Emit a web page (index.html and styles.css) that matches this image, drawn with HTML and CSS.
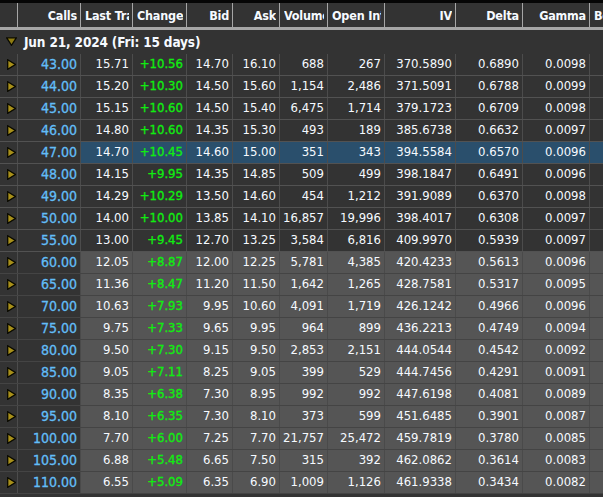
FILE: index.html
```html
<!DOCTYPE html>
<html lang="en">
<head>
<meta charset="utf-8">
<title>Option chain</title>
<link rel="stylesheet" href="styles.css">
</head>
<body>
<svg class="defs" width="0" height="0" aria-hidden="true">
<symbol id="tri-right" viewBox="0 0 9 11"><path d="M.7.7 8.4 5.5.7 10.3Z" fill="#a8901a" stroke="#0a0a00" stroke-width="1.3"/></symbol>
<symbol id="tri-down" viewBox="0 0 11 9"><path d="M.7.8H10.3L5.5 8.3Z" fill="#8f7c12" stroke="#0a0a00" stroke-width="1.3"/></symbol>
</svg>
<main class="chain">
<div class="row head"><span></span><span class="c"><b>Calls</b></span><span class="c"><b>Last Trade</b></span><span class="c"><b>Change</b></span><span class="c"><b>Bid</b></span><span class="c"><b>Ask</b></span><span class="c"><b>Volume</b></span><span class="c"><b>Open Interest</b></span><span class="c"><b>IV</b></span><span class="c"><b>Delta</b></span><span class="c"><b>Gamma</b></span><span class="c beta"><b>Beta</b></span></div>
<div class="group"><svg class="down"><use href="#tri-down"/></svg><span>Jun 21, 2024 (Fri: 15 days)</span></div>
<div class="row"><span class="ic"><svg class="right"><use href="#tri-right"/></svg></span><span class="c k">43.00</span><span class="c">15.71</span><span class="c up">+10.56</span><span class="c">14.70</span><span class="c">16.10</span><span class="c">688</span><span class="c">267</span><span class="c">370.5890</span><span class="c">0.6890</span><span class="c">0.0098</span><span class="c"></span></div>
<div class="row"><span class="ic"><svg class="right"><use href="#tri-right"/></svg></span><span class="c k">44.00</span><span class="c">15.20</span><span class="c up">+10.30</span><span class="c">14.50</span><span class="c">15.60</span><span class="c">1,154</span><span class="c">2,486</span><span class="c">371.5091</span><span class="c">0.6788</span><span class="c">0.0099</span><span class="c"></span></div>
<div class="row"><span class="ic"><svg class="right"><use href="#tri-right"/></svg></span><span class="c k">45.00</span><span class="c">15.15</span><span class="c up">+10.60</span><span class="c">14.50</span><span class="c">15.40</span><span class="c">6,475</span><span class="c">1,714</span><span class="c">379.1723</span><span class="c">0.6709</span><span class="c">0.0098</span><span class="c"></span></div>
<div class="row"><span class="ic"><svg class="right"><use href="#tri-right"/></svg></span><span class="c k">46.00</span><span class="c">14.80</span><span class="c up">+10.60</span><span class="c">14.35</span><span class="c">15.30</span><span class="c">493</span><span class="c">189</span><span class="c">385.6738</span><span class="c">0.6632</span><span class="c">0.0097</span><span class="c"></span></div>
<div class="row sel"><span class="ic"><svg class="right"><use href="#tri-right"/></svg></span><span class="c k">47.00</span><span class="c">14.70</span><span class="c up">+10.45</span><span class="c">14.60</span><span class="c">15.00</span><span class="c">351</span><span class="c">343</span><span class="c">394.5584</span><span class="c">0.6570</span><span class="c">0.0096</span><span class="c"></span></div>
<div class="row"><span class="ic"><svg class="right"><use href="#tri-right"/></svg></span><span class="c k">48.00</span><span class="c">14.15</span><span class="c up">+9.95</span><span class="c">14.35</span><span class="c">14.85</span><span class="c">509</span><span class="c">499</span><span class="c">398.1847</span><span class="c">0.6491</span><span class="c">0.0096</span><span class="c"></span></div>
<div class="row"><span class="ic"><svg class="right"><use href="#tri-right"/></svg></span><span class="c k">49.00</span><span class="c">14.29</span><span class="c up">+10.29</span><span class="c">13.50</span><span class="c">14.60</span><span class="c">454</span><span class="c">1,212</span><span class="c">391.9089</span><span class="c">0.6370</span><span class="c">0.0098</span><span class="c"></span></div>
<div class="row"><span class="ic"><svg class="right"><use href="#tri-right"/></svg></span><span class="c k">50.00</span><span class="c">14.00</span><span class="c up">+10.00</span><span class="c">13.85</span><span class="c">14.10</span><span class="c">16,857</span><span class="c">19,996</span><span class="c">398.4017</span><span class="c">0.6308</span><span class="c">0.0097</span><span class="c"></span></div>
<div class="row"><span class="ic"><svg class="right"><use href="#tri-right"/></svg></span><span class="c k">55.00</span><span class="c">13.00</span><span class="c up">+9.45</span><span class="c">12.70</span><span class="c">13.25</span><span class="c">3,584</span><span class="c">6,816</span><span class="c">409.9970</span><span class="c">0.5939</span><span class="c">0.0097</span><span class="c"></span></div>
<div class="row otm"><span class="ic"><svg class="right"><use href="#tri-right"/></svg></span><span class="c k">60.00</span><span class="c">12.05</span><span class="c up">+8.87</span><span class="c">12.00</span><span class="c">12.25</span><span class="c">5,781</span><span class="c">4,385</span><span class="c">420.4233</span><span class="c">0.5613</span><span class="c">0.0096</span><span class="c"></span></div>
<div class="row otm"><span class="ic"><svg class="right"><use href="#tri-right"/></svg></span><span class="c k">65.00</span><span class="c">11.36</span><span class="c up">+8.47</span><span class="c">11.20</span><span class="c">11.50</span><span class="c">1,642</span><span class="c">1,265</span><span class="c">428.7581</span><span class="c">0.5317</span><span class="c">0.0095</span><span class="c"></span></div>
<div class="row otm"><span class="ic"><svg class="right"><use href="#tri-right"/></svg></span><span class="c k">70.00</span><span class="c">10.63</span><span class="c up">+7.93</span><span class="c">9.95</span><span class="c">10.60</span><span class="c">4,091</span><span class="c">1,719</span><span class="c">426.1242</span><span class="c">0.4966</span><span class="c">0.0096</span><span class="c"></span></div>
<div class="row otm"><span class="ic"><svg class="right"><use href="#tri-right"/></svg></span><span class="c k">75.00</span><span class="c">9.75</span><span class="c up">+7.33</span><span class="c">9.65</span><span class="c">9.95</span><span class="c">964</span><span class="c">899</span><span class="c">436.2213</span><span class="c">0.4749</span><span class="c">0.0094</span><span class="c"></span></div>
<div class="row otm"><span class="ic"><svg class="right"><use href="#tri-right"/></svg></span><span class="c k">80.00</span><span class="c">9.50</span><span class="c up">+7.30</span><span class="c">9.15</span><span class="c">9.50</span><span class="c">2,853</span><span class="c">2,151</span><span class="c">444.0544</span><span class="c">0.4542</span><span class="c">0.0092</span><span class="c"></span></div>
<div class="row otm"><span class="ic"><svg class="right"><use href="#tri-right"/></svg></span><span class="c k">85.00</span><span class="c">9.05</span><span class="c up">+7.11</span><span class="c">8.25</span><span class="c">9.05</span><span class="c">399</span><span class="c">529</span><span class="c">444.7456</span><span class="c">0.4291</span><span class="c">0.0091</span><span class="c"></span></div>
<div class="row otm"><span class="ic"><svg class="right"><use href="#tri-right"/></svg></span><span class="c k">90.00</span><span class="c">8.35</span><span class="c up">+6.38</span><span class="c">7.30</span><span class="c">8.95</span><span class="c">992</span><span class="c">992</span><span class="c">447.6198</span><span class="c">0.4081</span><span class="c">0.0089</span><span class="c"></span></div>
<div class="row otm"><span class="ic"><svg class="right"><use href="#tri-right"/></svg></span><span class="c k">95.00</span><span class="c">8.10</span><span class="c up">+6.35</span><span class="c">7.30</span><span class="c">8.10</span><span class="c">373</span><span class="c">599</span><span class="c">451.6485</span><span class="c">0.3901</span><span class="c">0.0087</span><span class="c"></span></div>
<div class="row otm"><span class="ic"><svg class="right"><use href="#tri-right"/></svg></span><span class="c k">100.00</span><span class="c">7.70</span><span class="c up">+6.00</span><span class="c">7.25</span><span class="c">7.70</span><span class="c">21,757</span><span class="c">25,472</span><span class="c">459.7819</span><span class="c">0.3780</span><span class="c">0.0085</span><span class="c"></span></div>
<div class="row otm"><span class="ic"><svg class="right"><use href="#tri-right"/></svg></span><span class="c k">105.00</span><span class="c">6.88</span><span class="c up">+5.48</span><span class="c">6.65</span><span class="c">7.50</span><span class="c">315</span><span class="c">392</span><span class="c">462.0862</span><span class="c">0.3614</span><span class="c">0.0083</span><span class="c"></span></div>
<div class="row otm"><span class="ic"><svg class="right"><use href="#tri-right"/></svg></span><span class="c k">110.00</span><span class="c">6.55</span><span class="c up">+5.09</span><span class="c">6.35</span><span class="c">6.90</span><span class="c">1,009</span><span class="c">1,126</span><span class="c">461.9338</span><span class="c">0.3434</span><span class="c">0.0082</span><span class="c"></span></div>
</main>
</body>
</html>
```
FILE: styles.css
```css
html, body {
  margin: 0;
  height: 100%;
  background: #333333;
  overflow: hidden;
}
.defs { display: block; height: 0; }
.chain {
  width: 603px;
  height: 497px;
  overflow: hidden;
  box-sizing: border-box;
  border-top: 3px solid #050505;
  background: #333333;
  color: #f6faff;
  font: 13px/20px "DejaVu Sans", sans-serif;
  font-stretch: condensed;
}
.row {
  display: grid;
  grid-template-columns: 17px 63px 52px 54px 46px 47px 48px 57px 71px 67px 67px 60px;
  height: 22px;
  box-sizing: border-box;
  border-bottom: 1px solid #525252;
  width: 649px;
}
.c {
  display: block;
  overflow: hidden;
  white-space: nowrap;
  text-align: right;
  padding: 0 3px 0 3px;
  border-left: 1px solid #4c4c4c;
  min-width: 0;
}
.ic { display: flex; align-items: center; padding: 0 0 1px 7px; }
.right { width: 9px; height: 11px; display: block; }
.down { width: 11px; height: 9px; display: block; }
.k { color: #62bdf8; font-size: 14px; -webkit-text-stroke: 0.3px #62bdf8; background: #333333; }
.up { color: #10ee10; -webkit-text-stroke: 0.3px #10ee10; }
.head {
  height: 27px;
  border-bottom: 3px solid #a6a6a6;
  line-height: 26px;
}
.head .c {
  border-left: 1px solid #a6a6a6;
  padding: 0;
}
.head .c b {
  display: block;
  overflow: hidden;
  margin: 0 3px 0 4px;
  font-size: 12.5px;
  letter-spacing: -0.2px;
  font-weight: 700;
}
.head .beta { text-align: left; }
.group {
  display: flex;
  align-items: center;
  gap: 7px;
  height: 24px;
  padding: 0 0 1px 6px;
  box-sizing: border-box;
  font-size: 13.5px;
  letter-spacing: -0.15px;
  font-weight: 700;
}
.sel .c:not(.k) { background: #2a4f6c; }
.sel { background: #333333; }
.otm .c:not(.k) { background: #555555; border-left-color: #4a4a4a; }
.otm { border-bottom-color: #444444; }
```
